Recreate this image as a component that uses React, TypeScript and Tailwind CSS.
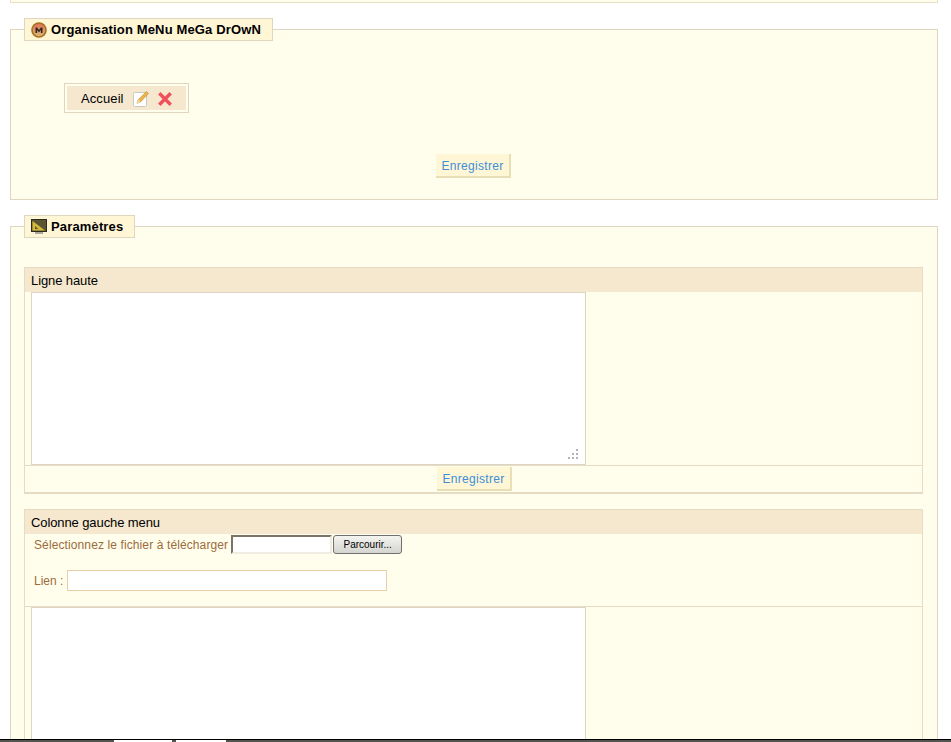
const font = { fontFamily: '"Liberation Sans", Arial, sans-serif' };

function MedalIcon() {
  return (
    <svg width="16" height="16" viewBox="0 0 16 16" className="shrink-0">
      <defs>
        <linearGradient id="medal" x1="0" y1="0" x2="0" y2="1">
          <stop offset="0" stopColor="#e0725a" />
          <stop offset="1" stopColor="#d8b878" />
        </linearGradient>
      </defs>
      <circle cx="8" cy="8" r="7.8" fill="#a8701c" />
      <circle cx="8" cy="8" r="6.2" fill="url(#medal)" />
      <path d="M4.5 11V5.5h1.6L8 8l1.9-2.5h1.6V11H9.9V8L8 10.2 6.1 8v3z" fill="#33261a" />
    </svg>
  );
}

function SquareIcon() {
  return (
    <svg width="16" height="16" viewBox="0 0 16 16" className="shrink-0">
      <rect x="0" y="0" width="16" height="13" fill="#2e2b1e" />
      <rect x="1" y="1" width="14" height="11" fill="#5b5630" />
      <path d="M1.5 2v9.5H14z" fill="#d6b93a" />
      <path d="M4 7v3h3.4z" fill="#5b5630" />
      <rect x="4" y="13" width="8" height="2" fill="#a8a8a0" />
    </svg>
  );
}

function EditIcon() {
  return (
    <svg width="16" height="16" viewBox="0 0 16 16" className="shrink-0">
      <rect x="0.5" y="1.5" width="13" height="14" rx="1" fill="#fff" stroke="#c8c8c4" />
      <path d="M13.5 0.5l2 2-8 8.5-3.5 1.2 1.2-3.5z" fill="#eeb44a" stroke="#b98a30" strokeWidth="0.6" />
      <path d="M4 12.2l1.2-3.5 2.3 2.3z" fill="#f6e2b4" />
    </svg>
  );
}

function CrossIcon() {
  return (
    <svg width="14" height="14" viewBox="0 0 14 14" className="shrink-0">
      <path d="M2.5 2.5l9 9M11.5 2.5l-9 9" stroke="#f0505a" strokeWidth="3.4" strokeLinecap="square" />
    </svg>
  );
}

function SaveButton() {
  return (
    <button className="h-[24px] w-[75px] pt-[2px] bg-[#fff6d6] border-r-2 border-b-2 border-[#e8dfb6] text-[12px] tracking-[0.3px] text-[#3d8fd6]">
      Enregistrer
    </button>
  );
}

function Box({ icon, title, height, children }: { icon: React.ReactNode; title: string; height: string; children: React.ReactNode }) {
  return (
    <fieldset className={`border border-[#e0d6bf] bg-[#fffeec] mx-[10px] w-[928px] pl-[13px] pr-[14px] ${height}`}>
      <legend className="h-[23px] bg-[#fff6d6] border border-[#e0d6bf] px-[6px] flex items-center gap-[4px] text-[13px] tracking-[0.15px] font-bold text-black">
        {icon}
        <span className="pr-[5px]">{title}</span>
      </legend>
      {children}
    </fieldset>
  );
}

function PanelHeader({ title }: { title: string }) {
  return (
    <div className="h-[25px] pt-[2px] bg-[#f5e8cf] border-t border-[#e6dcc4] px-[6px] flex items-center text-[13px] tracking-[-0.1px] text-black">
      {title}
    </div>
  );
}

function EmptyArea({ height, grip }: { height: string; grip?: boolean }) {
  return (
    <div className={`relative w-[555px] ml-[6px] bg-white border border-[#ddd5c2] ${height}`}>
      {grip && (
        <svg width="11" height="11" viewBox="0 0 11 11" className="absolute right-[6px] bottom-[4px]">
          <path d="M8 0h2v2H8zM4 4h2v2H4zM8 4h2v2H8zM0 8h2v2H0zM4 8h2v2H4zM8 8h2v2H8z" fill="#b4b4b4" />
        </svg>
      )}
    </div>
  );
}

export default function App() {
  return (
    <div style={font} className="h-[742px] w-[951px] overflow-hidden bg-white flex flex-col">
      <div className="flex-1 overflow-hidden">
        <div className="h-[3px] w-[928px] mx-[10px] bg-[#fffeec] border border-t-0 border-[#e8e0c4]" />

        <div className="pt-[15px]">
          <Box icon={<MedalIcon />} title="Organisation MeNu MeGa DrOwN" height="h-[182px]">
            <div className="pt-[42px] pl-[40px]">
              <div className="w-[125px] h-[30px] border border-[#e0d6bf] p-[2px]">
                <div className="h-full bg-[#f5e8cf] flex items-center pl-[14px] gap-[9px] pt-[1px] text-[13px] tracking-[0.1px] text-black">
                  <span>Accueil</span>
                  <div className="flex items-center gap-[9px]">
                    <EditIcon />
                    <CrossIcon />
                  </div>
                </div>
              </div>
            </div>
            <div className="pt-[41px] flex justify-center">
              <SaveButton />
            </div>
          </Box>
        </div>

        <div className="pt-[15px]">
          <Box icon={<SquareIcon />} title="Paramètres" height="h-[560px]">
            <div className="pt-[29px]">
              <div className="border border-t-0 border-[#e6dcc4] border-b-2">
                <PanelHeader title="Ligne haute" />
                <EmptyArea height="h-[173px]" grip />
                <div className="h-[27px] pt-[1px] pl-[2px] border-t border-[#e6dcc4] flex justify-center">
                  <SaveButton />
                </div>
              </div>
              <div className="mt-[15px] border-x border-[#e6dcc4]">
                <PanelHeader title="Colonne gauche menu" />
                <div className="pl-[9px] pt-[1px] flex items-center text-[12px] tracking-[0.11px] text-[#9c6b3c]">
                  <span>Sélectionnez le fichier à télécharger</span>
                  <div className="ml-[3px] w-[101px] h-[19px] bg-white border-2 border-[#7a7468] border-r-[#f0ece2] border-b-[#f0ece2]" />
                  <button className="ml-[1px] w-[69px] h-[19px] rounded-[3px] border border-[#70706c] bg-linear-to-b from-[#f4f4f0] to-[#d4d4d0] text-[10px] tracking-normal text-black">
                    Parcourir...
                  </button>
                </div>
                <div className="pl-[9px] pt-[16px] h-[53px] flex items-start text-[12px] text-[#9c6b3c] border-b border-[#e6dcc4]">
                  <span className="leading-[23px]">Lien :</span>
                  <div className="ml-[4px] w-[320px] h-[21px] bg-white border border-[#e8cfa8]" />
                </div>
                <EmptyArea height="h-[200px]" />
              </div>
            </div>
          </Box>
        </div>
      </div>

      <div className="h-[3px] bg-[#555550] border-t border-black flex">
        <div className="ml-[114px] w-[58px] bg-white" />
        <div className="ml-[4px] w-[50px] bg-white" />
      </div>
    </div>
  );
}
